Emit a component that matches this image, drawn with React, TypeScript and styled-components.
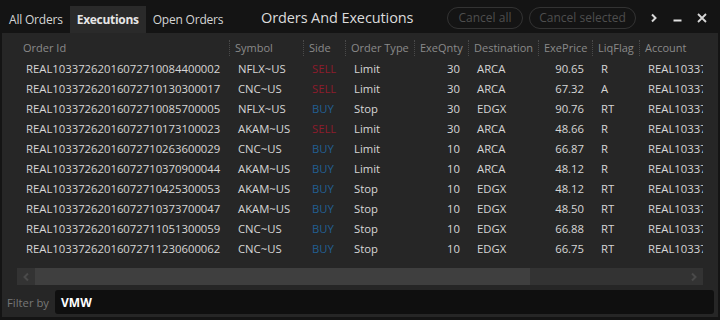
import React from "react";
import styled, { createGlobalStyle } from "styled-components";

const Global = createGlobalStyle`
  html, body { margin: 0; padding: 0; background: #141414; }
  body { font-family: "Open Sans", "Noto Sans", sans-serif; }
  * { box-sizing: border-box; }
`;

const Window = styled.div`
  width: 720px;
  height: 320px;
  background: #141414;
  display: flex;
  flex-direction: column;
  overflow: hidden;
`;

const TopBar = styled.div`
  height: 33px;
  display: flex;
  align-items: flex-end;
  padding-left: 2px;
  position: relative;
`;

const Tab = styled.div<{ $active?: boolean }>`
  height: 27px;
  padding: 0 7px;
  display: flex;
  align-items: center;
  font-size: 12px;
  letter-spacing: ${(p) => (p.$active ? "-0.3px" : "-0.2px")};
  color: ${(p) => (p.$active ? "#e6e6e6" : "#d4d4d4")};
  font-weight: ${(p) => (p.$active ? 700 : 400)};
  background: ${(p) => (p.$active ? "#2a2a2a" : "transparent")};
  white-space: nowrap;
`;

const Title = styled.div`
  position: absolute;
  left: 261px;
  top: 8px;
  font-size: 14.5px;
  letter-spacing: -0.1px;
  color: #dcdcdc;
  white-space: nowrap;
`;

const Actions = styled.div`
  margin-left: auto;
  align-self: center;
  display: flex;
  align-items: center;
  padding-right: 6px;
  margin-top: 2px;
`;

const Pill = styled.button<{ $w: number }>`
  width: ${(p) => p.$w}px;
  height: 22px;
  margin-right: 6px;
  border: 1.5px solid #333;
  border-radius: 11px;
  background: transparent;
  color: #4e4e4e;
  font-family: inherit;
  font-size: 12px;
  padding: 0;
  white-space: nowrap;
`;

const IconBtn = styled.div`
  width: 24px;
  height: 20px;
  display: flex;
  align-items: center;
  justify-content: center;
  color: #d8d8d8;
`;

const Panel = styled.div`
  flex: 1;
  margin: 0 2px 3px 2px;
  background: #262626;
  display: flex;
  flex-direction: column;
  padding-top: 4px;
`;

const TableWrap = styled.div`
  margin: 0 15px;
  overflow: hidden;
  height: 222px;
`;

const cols = "212px 74px 42px 69px 54px 70px 54px 47px 90px";

const Row = styled.div<{ $header?: boolean }>`
  display: grid;
  grid-template-columns: ${cols};
  height: ${(p) => (p.$header ? 22 : 20)}px;
  align-items: center;
  font-size: 11.3px;
  white-space: nowrap;
`;

const HCell = styled.div<{ $sep?: boolean }>`
  color: #8a8a8a;
  font-size: 11px;
  padding-left: 5px;
  height: 16px;
  line-height: 16px;
  border-left: ${(p) => (p.$sep ? "1px dotted #4a4a4a" : "1px solid transparent")};
  overflow: hidden;
`;

const Cell = styled.div<{ $right?: boolean; $tone?: "sell" | "buy" }>`
  color: ${(p) => (p.$tone === "sell" ? "#8e1c2c" : p.$tone === "buy" ? "#225f92" : "#d6d6d6")};
  padding-left: ${(p) => (p.$right ? 0 : 9)}px;
  padding-right: ${(p) => (p.$right ? 8 : 0)}px;
  text-align: ${(p) => (p.$right ? "right" : "left")};
  line-height: 20px;
  overflow: hidden;
`;

const ScrollBar = styled.div`
  margin: 9px 15px 0 15px;
  height: 17px;
  background: #333333;
  display: flex;
  align-items: stretch;
`;

const ScrollArrow = styled.div`
  width: 18px;
  display: flex;
  align-items: center;
  justify-content: center;
  color: #4a4a4a;
`;

const Thumb = styled.div`
  width: 495px;
  background: #3f3f3f;
`;

const Spacer = styled.div`
  flex: 1;
`;

const FilterRow = styled.div`
  margin-top: 5px;
  display: flex;
  align-items: center;
  padding: 0 4px 0 5px;
  gap: 6px;
`;

const FilterLabel = styled.div`
  font-size: 11.3px;
  color: #777;
  white-space: nowrap;
`;

const FilterInput = styled.div`
  flex: 1;
  height: 24px;
  background: #0f0f0f;
  border-radius: 3px;
  display: flex;
  align-items: center;
  padding-left: 6px;
  font-size: 12px;
  font-weight: 700;
  color: #ffffff;
`;

type Exec = {
  id: string;
  sym: string;
  side: "SELL" | "BUY";
  type: string;
  qty: number;
  dest: string;
  price: string;
  liq: string;
};

const data: Exec[] = [
  { id: "REAL10337262016072710084400002", sym: "NFLX~US", side: "SELL", type: "Limit", qty: 30, dest: "ARCA", price: "90.65", liq: "R" },
  { id: "REAL10337262016072710130300017", sym: "CNC~US", side: "SELL", type: "Limit", qty: 30, dest: "ARCA", price: "67.32", liq: "A" },
  { id: "REAL10337262016072710085700005", sym: "NFLX~US", side: "BUY", type: "Stop", qty: 30, dest: "EDGX", price: "90.76", liq: "RT" },
  { id: "REAL10337262016072710173100023", sym: "AKAM~US", side: "SELL", type: "Limit", qty: 30, dest: "ARCA", price: "48.66", liq: "R" },
  { id: "REAL10337262016072710263600029", sym: "CNC~US", side: "BUY", type: "Limit", qty: 10, dest: "ARCA", price: "66.87", liq: "R" },
  { id: "REAL10337262016072710370900044", sym: "AKAM~US", side: "BUY", type: "Limit", qty: 10, dest: "ARCA", price: "48.12", liq: "R" },
  { id: "REAL10337262016072710425300053", sym: "AKAM~US", side: "BUY", type: "Stop", qty: 10, dest: "EDGX", price: "48.12", liq: "RT" },
  { id: "REAL10337262016072710373700047", sym: "AKAM~US", side: "BUY", type: "Stop", qty: 10, dest: "EDGX", price: "48.50", liq: "RT" },
  { id: "REAL10337262016072711051300059", sym: "CNC~US", side: "BUY", type: "Stop", qty: 10, dest: "EDGX", price: "66.88", liq: "RT" },
  { id: "REAL10337262016072711230600062", sym: "CNC~US", side: "BUY", type: "Stop", qty: 10, dest: "EDGX", price: "66.75", liq: "RT" },
];

const headers = ["Order Id", "Symbol", "Side", "Order Type", "ExeQnty", "Destination", "ExePrice", "LiqFlag", "Account"];

const Chevron = ({ dir, color, size = 10 }: { dir: "left" | "right"; color: string; size?: number }) => (
  <svg width={size} height={size} viewBox="0 0 10 10">
    <path
      d={dir === "right" ? "M3 1.5 L6.5 5 L3 8.5" : "M7 1.5 L3.5 5 L7 8.5"}
      stroke={color}
      strokeWidth="2"
      fill="none"
    />
  </svg>
);

export default function App() {
  return (
    <Window>
      <Global />
      <TopBar>
        <Tab>All Orders</Tab>
        <Tab $active>Executions</Tab>
        <Tab>Open Orders</Tab>
        <Title>Orders And Executions</Title>
        <Actions>
          <Pill $w={76}>Cancel all</Pill>
          <Pill $w={107}>Cancel selected</Pill>
          <IconBtn>
            <Chevron dir="right" color="#d8d8d8" />
          </IconBtn>
          <IconBtn>
            <svg width="10" height="10" viewBox="0 0 10 10">
              <rect x="0.5" y="6.5" width="8" height="2" fill="#e0e0e0" />
            </svg>
          </IconBtn>
          <IconBtn>
            <svg width="10" height="10" viewBox="0 0 10 10">
              <path d="M1 1 L9 9 M9 1 L1 9" stroke="#d8d8d8" strokeWidth="1.8" />
            </svg>
          </IconBtn>
        </Actions>
      </TopBar>
      <Panel>
        <TableWrap>
          <Row $header>
            {headers.map((h, i) => (
              <HCell key={h} $sep={i > 0}>
                {h}
              </HCell>
            ))}
          </Row>
          {data.map((r) => (
            <Row key={r.id}>
              <Cell>{r.id}</Cell>
              <Cell>{r.sym}</Cell>
              <Cell $tone={r.side === "SELL" ? "sell" : "buy"}>{r.side}</Cell>
              <Cell>{r.type}</Cell>
              <Cell $right>{r.qty}</Cell>
              <Cell>{r.dest}</Cell>
              <Cell $right>{r.price}</Cell>
              <Cell>{r.liq}</Cell>
              <Cell>REAL1033726</Cell>
            </Row>
          ))}
        </TableWrap>
        <ScrollBar>
          <ScrollArrow>
            <Chevron dir="left" color="#4a4a4a" />
          </ScrollArrow>
          <Thumb />
          <Spacer />
          <ScrollArrow>
            <Chevron dir="right" color="#4a4a4a" />
          </ScrollArrow>
        </ScrollBar>
        <FilterRow>
          <FilterLabel>Filter by</FilterLabel>
          <FilterInput>VMW</FilterInput>
        </FilterRow>
      </Panel>
    </Window>
  );
}
